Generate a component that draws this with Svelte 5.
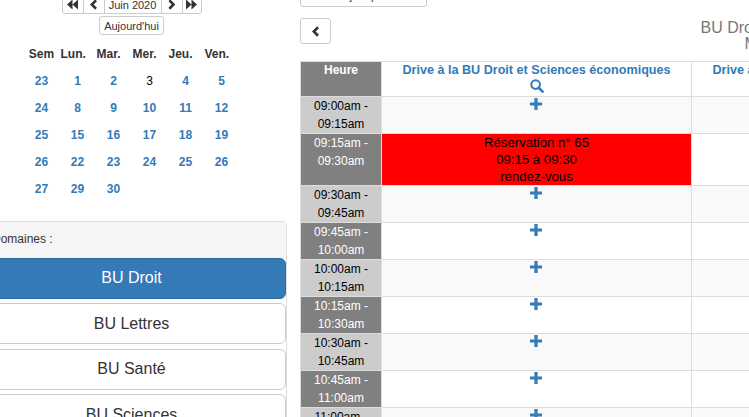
<script>
  const semaines = [
    [23, 1, 2, 3, 4, 5],
    [24, 8, 9, 10, 11, 12],
    [25, 15, 16, 17, 18, 19],
    [26, 22, 23, 24, 25, 26],
    [27, 29, 30]
  ];
  const domaines = ["BU Droit", "BU Lettres", "BU Santé", "BU Sciences"];
  const colonne = "Drive à la BU Droit et Sciences économiques";
  const creneaux = [
    ["09:00am -", "09:15am"],
    ["09:15am -", "09:30am", true],
    ["09:30am -", "09:45am"],
    ["09:45am -", "10:00am"],
    ["10:00am -", "10:15am"],
    ["10:15am -", "10:30am"],
    ["10:30am -", "10:45am"],
    ["10:45am -", "11:00am"],
    ["11:00am -", "11:15am"]
  ];
</script>

{#snippet plus()}
  <svg class="plus" viewBox="0 0 12 12" aria-hidden="true"><path d="M4.4 0h3.2v4.4H12v3.2H7.6V12H4.4V7.6H0V4.4h4.4z" /></svg>
{/snippet}

{#snippet chevron(flip, double)}
  <svg class="chev" class:flip class:double viewBox={double ? "0 0 12 12" : "0 0 8 12"} aria-hidden="true">
    {#if double}
      <path d="M0 6 6 .6V11.4zM6 6 12 .6V11.4z" />
    {:else}
      <path d="M5.6.4 7.6 2.4 4 6l3.6 3.6-2 2L0 6z" />
    {/if}
  </svg>
{/snippet}

<div class="page">
  <aside class="gauche">
    <div class="nav">
      <div class="groupe">
        <button type="button">{@render chevron(false, true)}</button>
        <button type="button">{@render chevron(false, false)}</button>
        <button type="button" class="mois">Juin 2020</button>
        <button type="button">{@render chevron(true, false)}</button>
        <button type="button">{@render chevron(true, true)}</button>
      </div>
      <button type="button" class="auj">Aujourd'hui</button>
    </div>

    <table class="cal">
      <thead>
        <tr>
          {#each ["Sem", "Lun.", "Mar.", "Mer.", "Jeu.", "Ven."] as j}
            <th>{j}</th>
          {/each}
        </tr>
      </thead>
      <tbody>
        {#each semaines as semaine}
          <tr>
            {#each semaine as d, i}
              <td class:jour={d === 3 && i === 3}>{d}</td>
            {/each}
          </tr>
        {/each}
      </tbody>
    </table>

    <div class="panel">
      <div class="panel-titre">Domaines :</div>
      <div class="panel-corps">
        {#each domaines as d, i}
          <button type="button" class="dom" class:actif={i === 0}>{d}</button>
        {/each}
      </div>
    </div>
  </aside>

  <main class="droite">
    <button type="button" class="veille">« Voir le jour précédent</button>
    <div class="entete">
      <button type="button" class="retour">{@render chevron(false, false)}</button>
      <h4 class="titre">BU Droit - Drive à la BU Droit SE<br />Mercredi 3 juin 2020</h4>
    </div>

    <table class="planning">
      <thead>
        <tr>
          <th class="heure">Heure</th>
          {#each [0, 1] as _}
            <th class="ressource">
              <span>{colonne}</span>
              <svg class="loupe" viewBox="0 0 14 14" aria-hidden="true">
                <circle cx="5.6" cy="5.6" r="4.3" fill="none" stroke="currentColor" stroke-width="2" />
                <path d="M8.6 8.6 12.6 12.6" stroke="currentColor" stroke-width="2.6" stroke-linecap="round" />
              </svg>
            </th>
          {/each}
        </tr>
      </thead>
      <tbody>
        {#each creneaux as c, i}
          <tr class:pair={i % 2 === 0}>
            <td class="temps">{c[0]}<br />{c[1]}</td>
            {#if c[2]}
              <td class="resa"><div>Réservation n° 65<br />09:15 à 09:30<br />rendez-vous</div></td>
            {:else}
              <td class="libre">{@render plus()}</td>
            {/if}
            <td class="libre"></td>
          </tr>
        {/each}
      </tbody>
    </table>
  </main>
</div>

<style>
  :global(body) {
    overflow: hidden;
  }

  .page {
    width: 749px;
    height: 417px;
    overflow: hidden;
    display: flex;
    gap: 13px;
    font-family: "Liberation Sans", Arial, sans-serif;
    font-size: 12px;
    color: #333;
    background: #fff;
  }

  button {
    font: inherit;
    color: #333;
    background: #fff;
    border: 1px solid #ccc;
    border-radius: 3px;
    padding: 0;
  }

  .gauche {
    flex: 0 0 311px;
    margin-left: -24px;
    margin-top: -5px;
  }

  .nav {
    display: flex;
    flex-direction: column;
    align-items: center;
    gap: 2px;
    font-size: 11px;
  }

  .groupe {
    display: flex;
    height: 19px;
  }

  .groupe button {
    width: 22px;
    margin-left: -1px;
    border-radius: 0;
    display: flex;
    align-items: center;
    justify-content: center;
  }

  .groupe button:first-child {
    border-radius: 0 0 0 3px;
    margin-left: 0;
  }

  .groupe button:last-child {
    width: 20px;
    border-radius: 0 0 3px 0;
  }

  .groupe .mois {
    width: 58px;
  }

  .auj {
    height: 19px;
    width: 65px;
  }

  .chev {
    height: 11px;
    fill: #333;
  }

  .chev.flip {
    transform: scaleX(-1);
  }

  .cal {
    border-collapse: collapse;
    margin: 5px auto 0;
    width: 216px;
    table-layout: fixed;
  }

  .cal th,
  .cal td {
    height: 27px;
    padding: 0;
    text-align: center;
    font-weight: bold;
    color: #337ab7;
  }

  .cal th {
    color: #333;
    text-align: left;
    padding-left: 1px;
  }

  .cal th:first-child {
    text-align: center;
    padding-left: 0;
  }

  .cal td.jour {
    color: #000;
    font-weight: normal;
  }

  .panel {
    margin-top: 19px;
    border: 1px solid #ddd;
    border-radius: 4px;
  }

  .panel-titre {
    background: #f5f5f5;
    height: 35.5px;
    line-height: 34px;
    padding-left: 15px;
  }

  .panel-corps {
    display: flex;
    flex-direction: column;
    gap: 4.33px;
  }

  .dom {
    flex: none;
    height: 41.33px;
    font-size: 16px;
    border-radius: 6px;
  }

  .dom.actif {
    background: #337ab7;
    border-color: #2e6da4;
    color: #fff;
  }

  .droite {
    flex: 0 0 auto;
    margin-top: -15px;
    display: flex;
    flex-direction: column;
    align-items: flex-start;
  }

  .veille {
    flex: none;
    width: 127px;
    height: 22px;
    font-size: 11px;
  }

  .entete {
    flex: none;
    display: flex;
    width: 991px;
    margin-top: 11px;
  }

  .retour {
    flex: none;
    width: 31px;
    height: 26px;
    display: flex;
    align-items: center;
    justify-content: center;
  }

  .titre {
    flex: 1;
    margin: 0;
    text-align: center;
    font-size: 16px;
    line-height: 16px;
    font-weight: normal;
    color: #777;
    padding: 2px 0 0 12px;
    white-space: nowrap;
  }

  .planning {
    flex: none;
    border-collapse: collapse;
    margin-top: 9px;
    table-layout: fixed;
    width: 699px;
  }

  .planning th,
  .planning td {
    border: 1px solid #ddd;
    padding: 0;
    text-align: center;
    vertical-align: top;
  }

  .planning .heure {
    width: 80px;
    background: #808080;
    color: #fff;
    padding-top: 1px;
    height: 33px;
  }

  .ressource {
    width: 309px;
    color: #337ab7;
    font-size: 12.6px;
    font-weight: bold;
  }

  .ressource span {
    display: block;
    line-height: 16px;
  }

  .loupe {
    display: block;
    width: 14px;
    height: 14px;
    margin: 1px auto 0;
  }

  .temps {
    height: 36px;
    line-height: 18px;
    background: #808080;
    color: #fff;
  }

  .pair .temps {
    background: #ccc;
    color: #000;
  }

  .pair .libre {
    background: #f9f9f9;
  }

  .planning .libre {
    padding-right: 1px;
  }

  .resa {
    background: #f00;
    color: #000;
    font-size: 13.2px;
    line-height: 17px;
    height: 51px;
  }

  .plus {
    display: block;
    width: 12px;
    height: 12px;
    margin: 1px auto 0;
    fill: #337ab7;
  }
</style>
